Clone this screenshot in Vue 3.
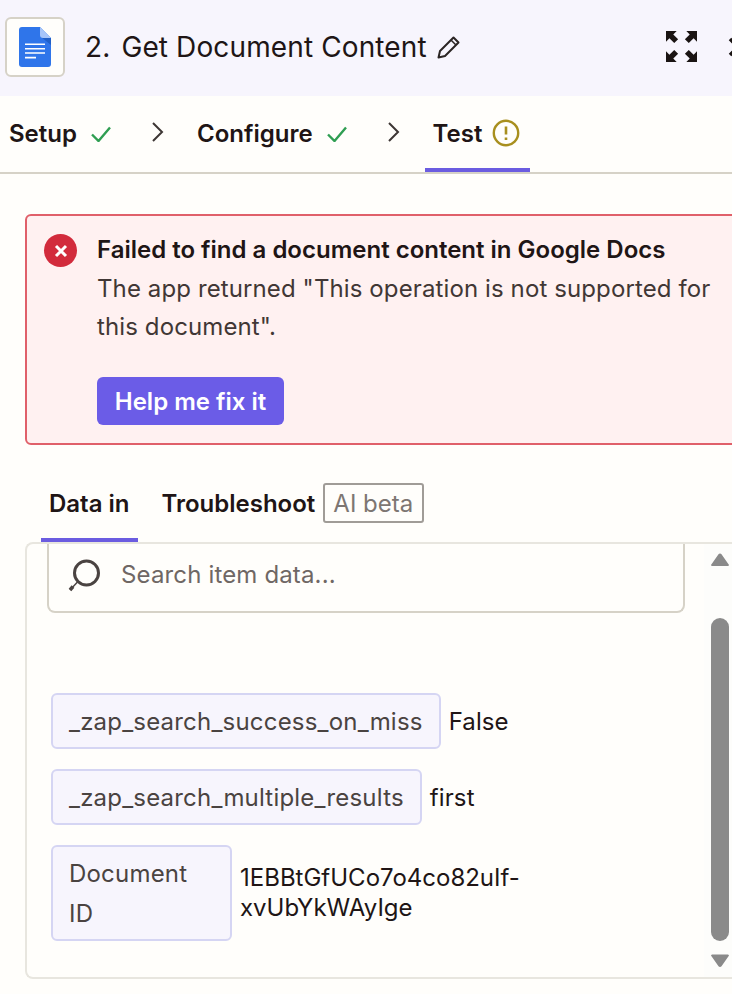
<script setup>
const steps = [
  { label: "Setup", done: true },
  { label: "Configure", done: true },
];

const rows = [
  { key: "_zap_search_success_on_miss", value: "False" },
  { key: "_zap_search_multiple_results", value: "first" },
];
</script>

<template>
  <div class="page">
    <header class="head">
      <div class="appIcon">
        <svg width="32" height="40" viewBox="0 0 32 40">
          <path d="M3 0h18l11 11v26a3 3 0 0 1-3 3H3a3 3 0 0 1-3-3V3a3 3 0 0 1 3-3z" fill="#2f75ea" />
          <path d="M22 10l10 8v-7z" fill="#2160c8" />
          <path d="M21 0l11 11h-8a3 3 0 0 1-3-3z" fill="#a6c5fa" />
          <path d="M6 17.300h20M6 21.700h20M6 26h20M6 30.600h11" stroke="#fff" stroke-width="1.600" fill="none" />
        </svg>
      </div>
      <h1 class="title"><span class="num">2.</span> Get Document Content</h1>
      <svg class="pencil" width="24" height="24" viewBox="0 0 24 24" fill="none" stroke="#2b2524" stroke-width="2">
        <path d="M1.500 22.500l1.500-6.500L16.500 2.500l5 5L8 21z" stroke-linejoin="round" />
        <path d="M14 5l5 5" stroke-width="1.500" />
      </svg>
      <svg class="expand" width="31" height="31" viewBox="0 0 32 32" fill="#1a1413">
        <path d="M0 0h11l-3.500 3.500 5 5-4 4-5-5L0 11z" />
        <path d="M32 0H21l3.500 3.500-5 5 4 4 5-5L32 11z" />
        <path d="M0 32h11l-3.500-3.500 5-5-4-4-5 5L0 21z" />
        <path d="M32 32H21l3.500-3.500-5-5 4-4 5 5L32 21z" />
      </svg>
      <svg class="close" width="20" height="20" viewBox="0 0 20 20" fill="none" stroke="#1a1413" stroke-width="3.500">
        <path d="M2 2l16 16M18 2L2 18" />
      </svg>
    </header>

    <nav class="steps">
      <template v-for="step in steps" :key="step.label">
        <div class="step">
          <span>{{ step.label }}</span>
          <svg width="22" height="18" viewBox="0 0 22 18" fill="none" stroke="#2f9e52" stroke-width="2.400">
            <path d="M2 10.500l6.500 6.500L20 3.500" />
          </svg>
        </div>
        <svg class="chev" width="14" height="22" viewBox="0 0 14 22" fill="none" stroke="#3d3634" stroke-width="2">
          <path d="M2 2l9 9-9 9" />
        </svg>
      </template>
      <div class="step current">
        <span>Test</span>
        <svg width="28" height="28" viewBox="0 0 28 28" fill="none">
          <circle cx="14" cy="14" r="12.200" stroke="#a88f1e" stroke-width="2.400" />
          <path d="M14 7.500v8M14 18.500v2.400" stroke="#a88f1e" stroke-width="2.600" />
        </svg>
      </div>
    </nav>

    <section class="alert">
      <div class="alertIcon">
        <svg width="14" height="14" viewBox="0 0 14 14" fill="none" stroke="#fff" stroke-width="3">
          <path d="M2 2l10 10M12 2L2 12" />
        </svg>
      </div>
      <div class="alertBody">
        <div class="alertTitle">Failed to find a document content in Google Docs</div>
        <p class="alertText">The app returned "This operation is not supported for this document".</p>
        <button class="fixBtn">Help me fix it</button>
      </div>
    </section>

    <div class="tabs">
      <div class="tab active">Data in</div>
      <div class="tab">Troubleshoot</div>
      <span class="aiBadge">AI beta</span>
    </div>

    <div class="panel">
      <div class="panelInner">
        <div class="search">
          <svg width="36" height="38" viewBox="0 0 36 38" fill="none" stroke="#4a4341">
            <circle cx="19.500" cy="18" r="12" stroke-width="3" />
            <path d="M10.500 27L3 35" stroke-width="1.500" />
            <path d="M6 31.500L3 35" stroke-width="3.500" />
          </svg>
          <span>Search item data...</span>
        </div>
        <div class="rows">
          <div v-for="row in rows" :key="row.key" class="row">
            <span class="chip">{{ row.key }}</span>
            <span class="value">{{ row.value }}</span>
          </div>
          <div class="row">
            <span class="chip chipWrap">Document<br />ID</span>
            <span class="value valueWrap">1EBBtGfUCo7o4co82uIf-<br />xvUbYkWAyIge</span>
          </div>
        </div>
      </div>
      <div class="scrollbar">
        <svg width="18" height="14" viewBox="0 0 18 14"><path d="M9 0.500a2 2 0 0 1 1.500 0.800l7 10a1 1 0 0 1-1 1.700H1.500a1 1 0 0 1-1-1.700l7-10A2 2 0 0 1 9 0.500z" fill="#8a8a8a" /></svg>
        <div class="thumb"></div>
        <svg width="18" height="15" viewBox="0 0 18 14"><path d="M9 13.500a2 2 0 0 0 1.500-0.800l7-10a1 1 0 0 0-1-1.700H1.500a1 1 0 0 0-1 1.700l7 10A2 2 0 0 0 9 13.500z" fill="#8a8a8a" /></svg>
      </div>
    </div>
  </div>
</template>

<style>
html,
body {
  margin: 0;
  overflow: hidden;
  background: #fffefb;
}
</style>

<style scoped>
.page {
  width: 732px;
  height: 994px;
  overflow: hidden;
  background: #fffefb;
  color: #201515;
  font-family: Inter, "Liberation Sans", sans-serif;
  font-size: 24px;
}

.head {
  height: 96px;
  background: #f7f5fd;
  display: flex;
  align-items: center;
  padding-left: 5px;
  box-sizing: border-box;
  width: 760px;
  padding-bottom: 3px;
}

.appIcon {
  width: 60px;
  height: 60px;
  box-sizing: border-box;
  border: 2px solid #d6d2c7;
  border-radius: 6px;
  background: #fffefb;
  display: flex;
  align-items: center;
  justify-content: center;
  flex-shrink: 0;
}

.title {
  margin: 0 0 0 20px;
  font-size: 28px;
  font-weight: 400;
  letter-spacing: 0.12px;
  white-space: nowrap;
}

.num {
  margin-right: 3px;
}

.pencil {
  margin-left: 10px;
}

.expand {
  margin-left: 205px;
}

.close {
  margin-left: 31px;
}

.steps {
  height: 78px;
  box-sizing: border-box;
  border-bottom: 2px solid #d6d2c7;
  display: flex;
  align-items: stretch;
  padding-left: 9px;
}

.step {
  display: flex;
  align-items: center;
  gap: 13px;
  font-weight: 600;
  padding-bottom: 2px;
}

.chev {
  align-self: center;
  margin: 0 32px 4px 39px;
}

.step.current {
  margin-left: -8px;
  padding: 2px 10px 0 8px;
  gap: 10px;
  height: 76px;
  box-sizing: border-box;
  border-bottom: 4px solid #6b5ce0;
}

.alert {
  margin: 40px 0 0 25px;
  width: 760px;
  height: 231px;
  box-sizing: border-box;
  border: 2px solid #e0606a;
  border-radius: 6px;
  background: #fff1f1;
  display: flex;
  padding: 15px 17px;
  gap: 20px;
}

.alertIcon {
  width: 33px;
  height: 33px;
  margin-top: 3px;
  border-radius: 50%;
  background: #d22b3c;
  display: flex;
  align-items: center;
  justify-content: center;
  flex-shrink: 0;
}

.alertBody {
  width: 625px;
}

.alertTitle {
  font-weight: 600;
  line-height: 38px;
  margin-bottom: 1px;
}

.alertText {
  margin: 0;
  line-height: 38px;
  letter-spacing: 0.11px;
  color: #413735;
}

.fixBtn {
  margin-top: 31px;
  height: 48px;
  width: 187px;
  border: none;
  border-radius: 6px;
  background: #6b5ce7;
  color: #fff;
  font: inherit;
  font-weight: 600;
}

.tabs {
  margin: 37px 0 0 41px;
  height: 60px;
  display: flex;
  align-items: flex-start;
  font-weight: 600;
}

.tab {
  height: 60px;
  box-sizing: border-box;
  padding: 0 8px 18px;
  display: flex;
  align-items: center;
}

.tab.active {
  border-bottom: 4px solid #6b5ce0;
  padding-bottom: 14px;
  margin-right: 16px;
}

.aiBadge {
  margin: 1px 0 0 0;
  height: 40px;
  box-sizing: border-box;
  padding: 0 9px 0 8px;
  display: flex;
  align-items: center;
  border: 2px solid #a09c97;
  border-radius: 3px;
  color: #7d7672;
  font-weight: 400;
}

.panel {
  margin-left: 25px;
  width: 730px;
  height: 437px;
  box-sizing: border-box;
  border: 2px solid #e8e6df;
  border-right: none;
  border-radius: 8px 0 0 8px;
  display: flex;
}

.panelInner {
  width: 677px;
  flex-shrink: 0;
}

.search {
  margin-left: 20px;
  width: 638px;
  height: 69px;
  box-sizing: border-box;
  border: 2px solid #d6d2c7;
  border-top: none;
  border-radius: 0 0 8px 8px;
  display: flex;
  align-items: center;
  padding: 0 0 7px 18px;
  gap: 18px;
  color: #6f6764;
  letter-spacing: 0.15px;
}

.rows {
  margin: 80px 0 0 24px;
  display: flex;
  flex-direction: column;
  gap: 20px;
}

.row {
  display: flex;
  gap: 8px;
  align-items: center;
}

.chip {
  height: 56px;
  box-sizing: border-box;
  padding: 0 16px;
  display: flex;
  align-items: center;
  background: #f7f5fd;
  border: 2px solid #d5d5f3;
  border-radius: 6px;
  color: #4a4341;
  letter-spacing: 0.2px;
  white-space: nowrap;
}

.chipWrap {
  display: block;
  height: 96px;
  width: 181px;
  line-height: 40px;
  padding-top: 7px;
}

.value {
  white-space: nowrap;
  letter-spacing: 0.1px;
}

.valueWrap {
  line-height: 30px;
  margin-bottom: 1px;
  letter-spacing: 0;
}

.scrollbar {
  width: 28px;
  padding: 9px 0 0 7px;
  box-sizing: border-box;
  display: flex;
  flex-direction: column;
  align-items: flex-start;
  background: #fdfdfb;
}

.thumb {
  width: 18px;
  height: 323px;
  margin: 51px 0 12px;
  border-radius: 9px;
  background: #8a8a8a;
}
</style>
